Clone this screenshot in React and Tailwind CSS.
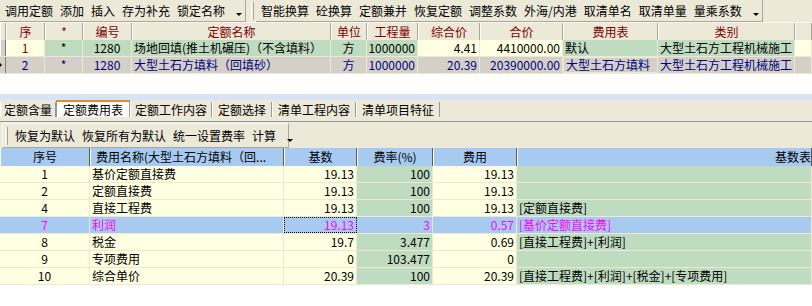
import React from 'react';

const FONT = "[font-family:'Noto_Sans_CJK_SC',sans-serif]";

function Chevron() {
  return (
    <span className="self-end mb-[5px] ml-[4px] w-0 h-0 shrink-0 border-l-[3px] border-r-[3px] border-t-[3px] border-l-transparent border-r-transparent border-t-black"></span>
  );
}

function Grip() {
  return <span className="w-[3px] h-[18px] shrink-0 border-l border-white border-r border-r-[#aca899]"></span>;
}

function Cell({ w, bg = 'bg-[#ffffe1]', align = 'justify-center', color = 'text-black', extra = '', children }) {
  return (
    <div className={`${w} ${bg} ${color} ${align} ${extra} h-full flex items-center px-[2px] border-r border-[#ebe8d6] whitespace-nowrap overflow-hidden shrink-0`}>
      {children}
    </div>
  );
}

function HeadCell({ w, children }) {
  return (
    <div className={`${w} h-full flex items-center justify-center bg-[#ece9d8] text-[#800000] border-l border-white border-r border-r-[#aca899] whitespace-nowrap overflow-hidden shrink-0`}>
      {children}
    </div>
  );
}

function BlueHead({ w, extra = 'justify-center', children }) {
  return (
    <div className={`${w} ${extra} h-full flex items-center bg-[#a6caf0] border-l border-white border-r border-r-[#5a5a5a] whitespace-nowrap overflow-hidden shrink-0`}>
      {children}
    </div>
  );
}

const costRows = [
  ['1', '基价定额直接费', '19.13', '100', '19.13', ''],
  ['2', '定额直接费', '19.13', '100', '19.13', ''],
  ['4', '直接工程费', '19.13', '100', '19.13', '[定额直接费]'],
  ['7', '利润', '19.13', '3', '0.57', '[基价定额直接费]'],
  ['8', '税金', '19.7', '3.477', '0.69', '[直接工程费]+[利润]'],
  ['9', '专项费用', '0', '103.477', '0', ''],
  ['10', '综合单价', '20.39', '100', '20.39', '[直接工程费]+[利润]+[税金]+[专项费用]'],
];

export default function App() {
  const tb1 = ['调用定额', '添加', '插入', '存为补充', '锁定名称'];
  const tb2 = ['智能换算', '砼换算', '定额兼并', '恢复定额', '调整系数', '外海/内港', '取清单名', '取清单量', '量乘系数'];
  const tabs = [
    ['定额含量', 'w-[56px]'],
    ['定额费用表', 'w-[74px]'],
    ['定额工作内容', 'w-[82px]'],
    ['定额选择', 'w-[60px]'],
    ['清单工程内容', 'w-[84px]'],
    ['清单项目特征', 'w-[84px]'],
  ];

  return (
    <div className={`w-[812px] h-[306px] bg-white overflow-hidden text-[12px] leading-none ${FONT}`}>
      {/* top toolbar */}
      <div className="h-[23px] bg-[#ece9d8] flex border-b border-[#f7f6f0]">
        <div className="w-[246px] h-[22px] flex items-center pl-[5px] gap-[7px] border-r border-b border-[#aca899] shrink-0">
          {tb1.map((t) => (
            <span key={t} className="whitespace-nowrap shrink-0">{t}</span>
          ))}
          <Chevron />
        </div>
        <div className="w-[10px] flex items-center justify-end pr-[2px] shrink-0">
          <Grip />
        </div>
        <div className="w-[507px] h-[22px] flex items-center pl-[5px] gap-[7px] border-r border-b border-[#aca899] shrink-0">
          {tb2.map((t) => (
            <span key={t} className="whitespace-nowrap shrink-0">{t}</span>
          ))}
          <Chevron />
        </div>
      </div>

      {/* top grid */}
      <div className="h-[17px] flex">
        <HeadCell w="w-[6px]"></HeadCell>
        <HeadCell w="w-[39px]">序</HeadCell>
        <HeadCell w="w-[38px]">*</HeadCell>
        <HeadCell w="w-[49px]">编号</HeadCell>
        <HeadCell w="w-[199px]">定额名称</HeadCell>
        <HeadCell w="w-[36px]">单位</HeadCell>
        <HeadCell w="w-[51px]">工程量</HeadCell>
        <HeadCell w="w-[62px]">综合价</HeadCell>
        <HeadCell w="w-[83px]">合价</HeadCell>
        <HeadCell w="w-[95px]">费用表</HeadCell>
        <HeadCell w="w-[137px]">类别</HeadCell>
        <HeadCell w="w-[17px]"></HeadCell>
      </div>
      <div className="h-[17px] flex border-b border-[#ebe8d6]">
        <div className="w-[6px] h-full bg-[#d4d0c8] border-l border-white border-r border-r-[#808080] shrink-0"></div>
        <Cell w="w-[39px]" color="text-[#800000]">1</Cell>
        <Cell w="w-[38px]" bg="bg-[#c0dcc0]">*</Cell>
        <Cell w="w-[49px]" bg="bg-[#c0dcc0]">1280</Cell>
        <Cell w="w-[199px]" bg="bg-[#c0dcc0]" align="justify-start">场地回填(推土机碾压)（不含填料）</Cell>
        <Cell w="w-[36px]" bg="bg-[#c0dcc0]">方</Cell>
        <Cell w="w-[51px]" bg="bg-[#c0dcc0]" align="justify-end">1000000</Cell>
        <Cell w="w-[62px]" align="justify-end">4.41</Cell>
        <Cell w="w-[83px]" align="justify-end">4410000.00</Cell>
        <Cell w="w-[95px]" bg="bg-[#c0dcc0]" align="justify-start">默认</Cell>
        <Cell w="w-[137px]" bg="bg-[#c0dcc0]" align="justify-start">大型土石方工程机械施工</Cell>
        <Cell w="w-[17px]"></Cell>
      </div>
      <div className="h-[17px] flex border-b border-[#ebe8d6]">
        <div className="w-[6px] h-full bg-[#d4d0c8] border-r border-[#808080] shrink-0 flex items-center">
          <span className="w-0 h-0 border-t-[2px] border-b-[2px] border-l-[2px] border-t-transparent border-b-transparent border-l-black"></span>
        </div>
        <Cell w="w-[39px]" bg="bg-[#d4d0c8]" color="text-[#000080]">2</Cell>
        <Cell w="w-[38px]" bg="bg-[#d4d0c8]" color="text-[#000080]">*</Cell>
        <Cell w="w-[49px]" bg="bg-[#d4d0c8]" color="text-[#000080]">1280</Cell>
        <Cell w="w-[199px]" bg="bg-[#d4d0c8]" color="text-[#000080]" align="justify-start">大型土石方填料（回填砂）</Cell>
        <Cell w="w-[36px]" bg="bg-[#d4d0c8]" color="text-[#000080]">方</Cell>
        <Cell w="w-[51px]" bg="bg-[#d4d0c8]" color="text-[#000080]" align="justify-end">1000000</Cell>
        <Cell w="w-[62px]" bg="bg-[#d4d0c8]" color="text-[#000080]" align="justify-end">20.39</Cell>
        <Cell w="w-[83px]" bg="bg-[#d4d0c8]" color="text-[#000080]" align="justify-end">20390000.00</Cell>
        <Cell w="w-[95px]" bg="bg-[#d4d0c8]" color="text-[#000080]" align="justify-start" extra="border border-[#202020]">大型土石方填料</Cell>
        <Cell w="w-[137px]" bg="bg-[#d4d0c8]" color="text-[#000080]" align="justify-start">大型土石方工程机械施工</Cell>
        <Cell w="w-[17px]" bg="bg-[#d4d0c8]"></Cell>
      </div>

      {/* empty area */}
      <div className="h-[20px] bg-white"></div>
      <div className="h-[6px] bg-[#d8e3f5]"></div>

      {/* tabs */}
      <div className="h-[22px] bg-[#ece9d8] flex items-end border-b border-[#919b9c] pb-[4px]">
        {tabs.map(([t, w], i) =>
          i === 1 ? (
            <div key={t} className={`${w} h-[17px] bg-white border-t-2 border-[#e68b2c] border-l border-l-[#919b9c] border-r border-r-[#919b9c] flex items-center justify-center shrink-0 whitespace-nowrap`}>
              {t}
            </div>
          ) : (
            <div key={t} className={`${w} h-[15px] border-r border-[#919b9c] border-l border-l-white flex items-center justify-center shrink-0 whitespace-nowrap`}>
              {t}
            </div>
          )
        )}
      </div>

      {/* second toolbar */}
      <div className="h-[26px] bg-[#ece9d8] pt-[1px] pl-[2px]">
        <div className="w-[287px] h-[25px] flex items-center pl-[2px] gap-[7px] border-t border-l border-white border-r border-b border-r-[#aca899] border-b-[#aca899]">
          <Grip />
          <span className="whitespace-nowrap shrink-0">恢复为默认</span>
          <span className="whitespace-nowrap shrink-0">恢复所有为默认</span>
          <span className="whitespace-nowrap shrink-0">统一设置费率</span>
          <span className="whitespace-nowrap shrink-0">计算</span>
          <Chevron />
        </div>
      </div>

      {/* cost grid */}
      <div className="h-[18px] flex">
        <BlueHead w="w-[90px]">序号</BlueHead>
        <BlueHead w="w-[194px]" extra="justify-start pl-[5px]">费用名称(大型土石方填料（回...</BlueHead>
        <BlueHead w="w-[73px]">基数</BlueHead>
        <BlueHead w="w-[76px]">费率(%)</BlueHead>
        <BlueHead w="w-[84px]">费用</BlueHead>
        <BlueHead w="w-[295px]" extra="justify-start pl-[257px]">基数表达式</BlueHead>
      </div>
      {costRows.map((r) => {
        const sel = r[0] === '7';
        const cream = sel ? 'bg-[#a6caf0]' : 'bg-[#ffffe1]';
        const green = sel ? 'bg-[#a6caf0]' : 'bg-[#c0dcc0]';
        const color = sel ? 'text-[#ff00ff]' : 'text-black';
        return (
          <div key={r[0]} className="h-[17px] flex border-b border-[#ebe8d6]">
            <Cell w="w-[90px]" bg={cream} color={color}>{r[0]}</Cell>
            <Cell w="w-[194px]" bg={cream} color={color} align="justify-start">{r[1]}</Cell>
            <Cell w="w-[73px]" bg={cream} color={color} align="justify-end" extra={sel ? 'border border-dotted border-black' : ''}>{r[2]}</Cell>
            <Cell w="w-[76px]" bg={green} color={color} align="justify-end">{r[3]}</Cell>
            <Cell w="w-[84px]" bg={cream} color={color} align="justify-end">{r[4]}</Cell>
            <Cell w="w-[295px]" bg={green} color={color} align="justify-start">{r[5]}</Cell>
          </div>
        );
      })}
    </div>
  );
}
